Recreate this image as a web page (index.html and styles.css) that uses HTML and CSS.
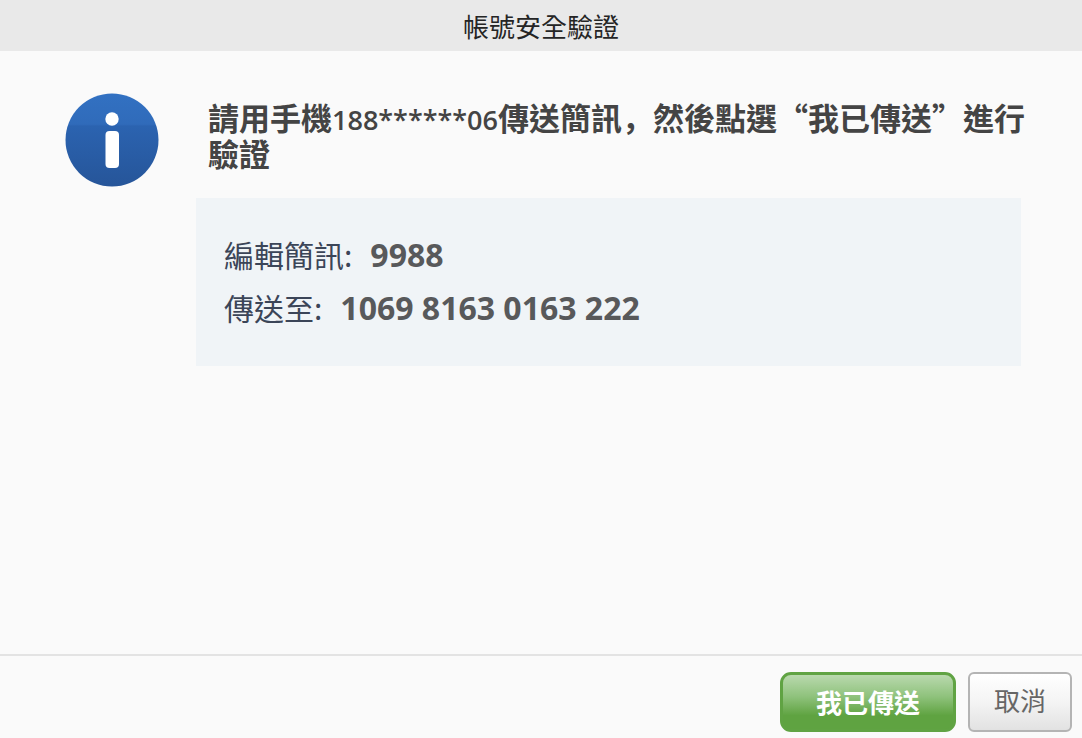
FILE: index.html
```html
<!DOCTYPE html>
<html lang="zh-Hant">
<head>
<meta charset="utf-8">
<title>帳號安全驗證</title>
<link rel="stylesheet" href="styles.css">
</head>
<body>
<div class="dialog" role="dialog" aria-labelledby="dialog-title">
  <header class="dialog-header">
    <h1 class="dialog-title" id="dialog-title">帳號安全驗證</h1>
  </header>
  <main class="dialog-body">
    <svg class="info-icon" viewBox="0 0 94 94" aria-hidden="true">
      <defs>
        <linearGradient id="info-fill" x1="0" y1="0" x2="0" y2="1">
          <stop offset="0" stop-color="#3271c2"/>
          <stop offset="0.33" stop-color="#306bba"/>
          <stop offset="0.35" stop-color="#2b63b0"/>
          <stop offset="1" stop-color="#265599"/>
        </linearGradient>
      </defs>
      <circle cx="47" cy="47" r="46.5" fill="url(#info-fill)"/>
      <circle cx="47" cy="26" r="6.7" fill="#fff"/>
      <rect x="40.5" y="38" width="13.5" height="37" rx="4" fill="#fff"/>
    </svg>
    <div class="content">
      <p class="message">請用手機<span class="phone">188******06</span>傳送簡訊<span class="mark" lang="zh-Hans">，</span>然後點選<span class="mark" lang="zh-Hans">“</span>我已傳送<span class="mark" lang="zh-Hans">”</span>進行驗證</p>
      <dl class="sms">
        <div class="sms-row"><dt>編輯簡訊:</dt><dd>9988</dd></div>
        <div class="sms-row"><dt>傳送至:</dt><dd>1069 8163 0163 222</dd></div>
      </dl>
    </div>
  </main>
  <footer class="dialog-footer">
    <button class="button button-primary" type="button">我已傳送</button>
    <button class="button button-plain" type="button">取消</button>
  </footer>
</div>
</body>
</html>
```
FILE: styles.css
```css
* {
  box-sizing: border-box;
}

body {
  margin: 0;
  background: #fafafa;
  font-family: "Noto Sans CJK TC", sans-serif;
}

.dialog {
  display: flex;
  flex-direction: column;
  min-height: 100vh;
}

.dialog-header {
  padding: 8px 16px 7px;
  background: #e9e9e9;
  text-align: center;
}

.dialog-title {
  margin: 0;
  color: #252525;
  font-size: 26px;
  font-weight: 400;
  line-height: 36px;
}

.dialog-body {
  display: flex;
  flex: 1;
  align-items: flex-start;
  gap: 37px;
  padding: 42px 61px 24px 65px;
}

.info-icon {
  flex: none;
  width: 94px;
  height: 94px;
}

.content {
  flex: 1;
  min-width: 0;
  padding-top: 6px;
}

.message {
  margin: 0 -16px 0 12px;
  color: #444;
  font-size: 31px;
  font-weight: 700;
  line-height: 36px;
}

.phone {
  font-family: "Open Sans", sans-serif;
  font-size: 27px;
  font-weight: 600;
  line-height: 1;
}

.mark {
  font-family: "Noto Sans CJK SC", sans-serif;
}

.sms {
  display: flex;
  flex-direction: column;
  gap: 16px;
  margin: 27px 0 0;
  padding: 38px 28px 40px;
  background: #f0f4f7;
}

.sms-row {
  display: flex;
  align-items: baseline;
  gap: 18px;
  line-height: 36px;
}

.sms dt {
  color: #3b4558;
  font-size: 30px;
}

.sms dd {
  margin: 0;
  color: #58595b;
  font-family: "Open Sans", sans-serif;
  font-size: 32px;
  font-weight: 700;
}

.dialog-footer {
  display: flex;
  justify-content: flex-end;
  gap: 12px;
  padding: 16px 10px 6px;
  border-top: 2px solid #e3e3e3;
}

.button {
  height: 60px;
  padding: 0 24px 4px;
  font-family: inherit;
  font-size: 26px;
  line-height: 36px;
}

.button-primary {
  padding: 0 33px;
  border: 3px solid #60a343;
  border-radius: 11px;
  background: linear-gradient(#b9d9ae, #8fc27c 40%, #5fa341 75%);
  color: #fff;
  font-weight: 700;
}

.button-plain {
  border: 2px solid #b4b4b4;
  border-radius: 6px;
  background: linear-gradient(#fff, #f4f4f4 50%, #e2e2e2);
  color: #666;
}
```
